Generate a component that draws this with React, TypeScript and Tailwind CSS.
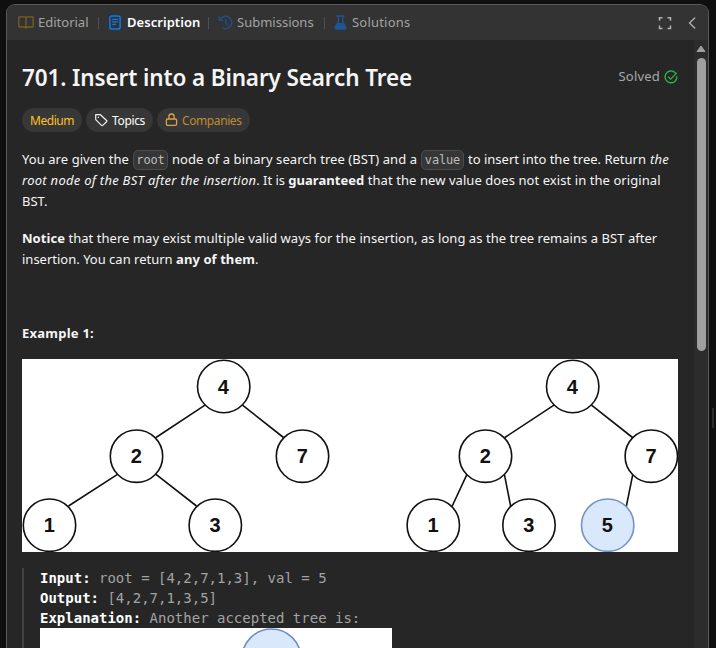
import { ReactNode } from 'react'

const Code = ({ children, className }: { children: ReactNode; className: string }) => (
  <code className={`flex h-5 items-center justify-center rounded-[5px] border border-[#4b4b4b] bg-[#363636] font-['DejaVu_Sans_Mono',monospace] text-[12px] leading-none tracking-[-0.15px] text-[#bcbcbc] ${className}`}>{children}</code>
)
const Line = ({ children }: { children: ReactNode }) => <span className="flex h-[21px] items-center whitespace-pre">{children}</span>
const Divider = () => <span className="h-3 w-px shrink-0 bg-[#505050]" />

type N = [number, number, string, boolean?]
const nodes: N[] = [
  [201.7, 27.5, '4'], [114.5, 97.2, '2'], [280.5, 97.2, '7'], [27.5, 166.2, '1'], [193.3, 166.2, '3'],
  [550.7, 27.5, '4'], [463.5, 97.2, '2'], [629.3, 97.2, '7'], [411.3, 166.2, '1'], [507, 166.2, '3'], [585.7, 166.2, '5', true],
]
const edges = [
  'M183 46.2 134 78.5', 'M220.5 46.2 261.5 78.5', 'M95.5 115.3 46.5 147', 'M134 115.3 174.5 147',
  'M532 46.2 482.8 78.5', 'M569.5 46.2 610.5 78.5', 'M444.7 115.8 430 147.5', 'M482.5 115.8 488.7 147.5', 'M610.7 115.8 604.3 147.5',
]

const Tree = () => (
  <svg viewBox="0 0 656 193" className="block h-[193px] w-[656px] bg-white">
    <path d={edges.join('')} stroke="#111" strokeWidth="1.6" />
    {nodes.map(([x, y, t, hot], i) => (
      <g key={i}>
        <circle cx={x} cy={y} r="26.2" fill={hot ? '#dae8fc' : '#fff'} stroke={hot ? '#7494c8' : '#111'} strokeWidth="1.6" />
        <text x={x - 0.3} y={y + 7} textAnchor="middle" fontSize="20" fontWeight="700" fill="#111" className="font-['Liberation_Sans',sans-serif]">{t}</text>
      </g>
    ))}
  </svg>
)

const BookIcon = () => (
  <svg viewBox="0 0 16 13" className="h-[13px] w-4 shrink-0" fill="none" stroke="#7c5e20" strokeWidth="1.3" strokeLinejoin="round">
    <path d="M8 2.2Q8 .8 6.5.8H1.6Q.8.8.8 1.6v8.600q0 .8.8.8H6.500Q8 11 8 12.200 8 11 9.500 11h4.900q.8 0 .8-.8V1.600q0-.8-.8-.8H9.500Q8 .8 8 2.200Z M8 2.200V12" />
  </svg>
)
const DocIcon = () => (
  <svg viewBox="0 0 12 15" className="h-[15px] w-3 shrink-0" fill="none" stroke="#0a7bf5" strokeLinecap="round">
    <rect x=".9" y=".9" width="10.2" height="13.200" rx="1.8" strokeWidth="1.5" />
    <path d="M3.600 4.300h4.800M3.600 6.800h4.800M3.600 9.300h2.900" strokeWidth="1.2" />
  </svg>
)
const HistoryIcon = () => (
  <svg viewBox="0 0 15 15" className="h-[15px] w-[15px] shrink-0" fill="none" stroke="#204f82" strokeWidth="1.5" strokeLinecap="round" strokeLinejoin="round">
    <path d="M2.200 4.300A6.200 6.200 0 1 1 4.600 12.900M7.700 4.400v3.500l1.800 1.900" />
    <path d="M.900 1.800v3.700h3.700z" fill="#204f82" strokeWidth=".8" />
  </svg>
)
const FlaskIcon = () => (
  <svg viewBox="0 0 13 15" className="h-[15px] w-[13px] shrink-0" fill="none" stroke="#1f5596" strokeWidth="1.300" strokeLinecap="round" strokeLinejoin="round">
    <path d="M3 1h7M4.300 1v5.500M8.700 1v5.500" />
    <path d="M4.300 6.500 3.400 8.800h6.200L8.700 6.500" />
    <path d="M3.300 8.700h6.400l2.200 3.700q.3 1.600-1.300 1.600H2.400q-1.600 0-1.300-1.600z" fill="#1f5596" />
  </svg>
)

const Tag = ({ children, className }: { children: ReactNode; className: string }) => (
  <span className={`flex h-6 items-center rounded-full bg-[#373737] text-[12px] ${className}`}>{children}</span>
)

export default function App() {
  return (
    <div className="flex h-[648px] w-[716px] overflow-hidden bg-[#0f0f0f] pl-1.5 pt-1 font-['Noto_Sans','Open_Sans',sans-serif] text-[13px] text-[#f5f5f5]">
      <section className="flex w-[703px] shrink-0 flex-col overflow-hidden rounded-t-[9px] border border-b-0 border-[#5a5a5a] bg-[#262626]">
        <header className="flex h-[35px] shrink-0 items-center bg-[#333] text-[#a3a3a3]">
          <div className="flex w-[91px] items-center pl-[11px]"><BookIcon /><span className="ml-1">Editorial</span></div>
          <Divider />
          <div className="flex w-[109px] items-center pl-[10px]"><DocIcon /><span className="ml-1.5 font-semibold tracking-[0.05px] text-white">Description</span></div>
          <Divider />
          <div className="flex w-[115px] items-center pl-[9px]"><HistoryIcon /><span className="ml-1">Submissions</span></div>
          <Divider />
          <div className="flex items-center pl-[9px]"><FlaskIcon /><span className="ml-[5px] tracking-[0.2px]">Solutions</span></div>
          <svg viewBox="0 0 14 14" className="ml-auto h-3.5 w-3.5" fill="none" stroke="#b0b0b0" strokeWidth="1.5"><path d="M1.500 4.800V1.800h3M9.500 1.800h3v3M12.500 9.500v3h-3M4.500 12.500h-3v-3" /></svg>
          <svg viewBox="0 0 8 12" className="ml-[16px] mr-[12px] h-3 w-2" fill="none" stroke="#b0b0b0" strokeWidth="1.400" strokeLinecap="round" strokeLinejoin="round"><path d="M6.700.900 1.500 6l5.200 5.100" /></svg>
        </header>
        <div className="flex min-h-0 flex-1">
          <main className="w-[687px] shrink-0 overflow-hidden pl-[15px] pr-4">
            <div className="mt-[23px] flex h-[30px] items-center justify-between">
              <h1 className="whitespace-nowrap text-[22.5px] font-semibold leading-[30px] tracking-[-0.12px]">701. Insert into a Binary Search Tree</h1>
              <span className="-mt-[3px] flex items-center tracking-[0.2px] text-[#a8a8a8]">Solved
                <svg viewBox="0 0 14 14" className="ml-[4px] h-3.5 w-3.5" fill="none" stroke="#28b84a" strokeWidth="1.300" strokeLinecap="round" strokeLinejoin="round"><path d="M11.200 2.700A5.900 5.900 0 1 0 12.900 6.600M4.400 6.900l2.200 2.200 5.800-5.700" /></svg>
              </span>
            </div>
            <div className="mt-[15px] flex gap-1">
              <Tag className="w-[60px] justify-center tracking-[-0.46px] text-[#ffc01e]"><span className="pt-0.5">Medium</span></Tag>
              <Tag className="w-[67px] pl-2 tracking-[-0.346px] text-white">
                <svg viewBox="0 0 14 14" className="mr-1 h-3.5 w-3.5" fill="none" stroke="#f0f0f0" strokeWidth="1.200" strokeLinejoin="round"><path d="M1.700 1.700h4.700L12.600 7.500q.600.600 0 1.200L8.700 12.400q-.600.500-1.200 0L1.700 6.600z" /><circle cx="4.300" cy="4.300" r=".7" fill="#f0f0f0" stroke="none" /></svg><span className="pt-0.5">Topics</span>
              </Tag>
              <Tag className="w-[93px] pl-2 tracking-[-0.41px] text-[#bf8c30]">
                <svg viewBox="0 0 13 14" className="mr-1 h-3.5 w-[13px]" fill="none" stroke="#dba344" strokeWidth="1.300"><rect x="1.400" y="6" width="10.200" height="6.300" rx="1.300" /><path d="M3.900 5.700V3.300Q3.900 1 6.500 1t2.600 2.300v2.400" /></svg><span className="pt-0.5">Companies</span>
              </Tag>
            </div>
            <p className="mt-[17px]">
              <Line><span className="w-[111px] tracking-[0.067px]">You are given the</span><Code className="w-[35px]">root</Code><span className="ml-[4px] w-[249px] tracking-[0.062px]">node of a binary search tree (BST) and a</span><Code className="w-[43px]">value</Code><span className="ml-[4px] w-[182px]">to insert into the tree. Return</span><em className="tracking-[0.22px]">the</em></Line>
              <Line><em className="tracking-[0.27px]">root node of the BST after the insertion</em><span className="tracking-[-0.05px]">. It is </span><b className="tracking-[0.04px]">guaranteed</b><span className="tracking-[0.07px]"> that the new value does not exist in the original</span></Line>
              <Line>BST.</Line>
            </p>
            <p className="mt-4">
              <Line><b className="tracking-[0.05px]">Notice</b><span className="tracking-[0.042px]"> that there may exist multiple valid ways for the insertion, as long as the tree remains a BST after</span></Line>
              <Line><span>insertion. You can return </span><b className="tracking-[0.08px]">any of them</b>.</Line>
            </p>
            <p className="mt-[53px]"><Line><b className="tracking-[0.24px]">Example 1:</b></Line></p>
            <div className="mt-[15px]"><Tree /></div>
            <pre className="mt-4 border-l-2 border-[#424242] pl-4 font-['DejaVu_Sans_Mono',monospace] text-[14px] leading-5 text-[#a3a3a3]">
              <div><b className="text-white">Input:</b> root = [4,2,7,1,3], val = 5</div>
              <div><b className="text-white">Output:</b> [4,2,7,1,3,5]</div>
              <div><b className="text-white">Explanation:</b> Another accepted tree is:</div>
              <svg viewBox="0 0 352 40" className="block h-10 w-[352px] bg-white"><circle cx="231.500" cy="30.500" r="29.500" fill="#dae8fc" stroke="#6c8ebf" strokeWidth="1.600" /></svg>
            </pre>
          </main>
          <aside className="flex w-[14px] shrink-0 flex-col items-center bg-[#2c2c2c] pt-[5px]">
            <svg viewBox="0 0 10 8" className="h-2 w-2.5" fill="#9f9f9f" stroke="#9f9f9f" strokeLinejoin="round"><path d="M5 1 9 6.500H1z" /></svg>
            <div className="mt-[5px] h-[293px] w-[9px] rounded-full bg-[#9f9f9f]" />
          </aside>
        </div>
      </section>
      <div className="ml-[3px] mt-[404px] h-5 w-0.5 bg-[#2d2d2d]" />
    </div>
  )
}
